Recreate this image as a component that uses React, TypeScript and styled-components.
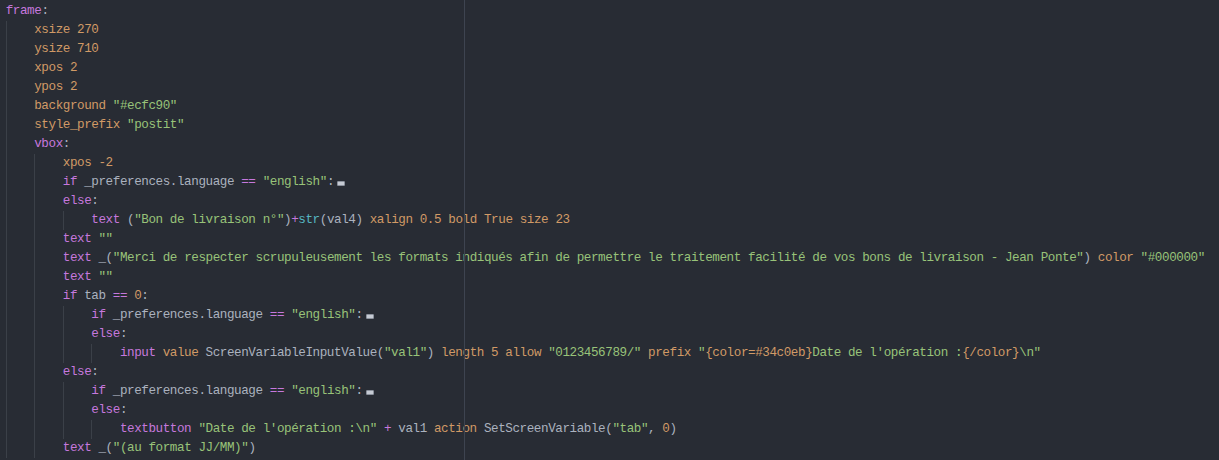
import React from "react";
import styled, { createGlobalStyle } from "styled-components";

const GlobalStyle = createGlobalStyle`
  html, body {
    margin: 0;
    padding: 0;
    background: #282c34;
    overflow: hidden;
  }
`;

type Kind = "kw" | "prop" | "num" | "str" | "fn" | "op" | "plain" | "tag" | "fold";
type Tok = [Kind, string];

const colors: Record<Kind, string> = {
  kw: "#c678dd",
  prop: "#d19a66",
  num: "#d19a66",
  str: "#98c379",
  fn: "#56b6c2",
  op: "#c678dd",
  plain: "#abb2bf",
  tag: "#d19a66",
  fold: "#abb2bf",
};

const Editor = styled.div`
  position: relative;
  width: 1219px;
  height: 460px;
  background: #282c34;
  padding: 2px 0 0 5.7px;
  box-sizing: border-box;
  font-family: "Liberation Mono", "DejaVu Sans Mono", monospace;
  font-size: 12.6px;
  letter-spacing: -0.42px;
  line-height: 19px;
  color: #abb2bf;
  display: flex;
  flex-direction: column;
  white-space: pre;
  overflow: hidden;
`;

const Ruler = styled.div`
  position: absolute;
  top: 0;
  bottom: 0;
  left: 464px;
  width: 1px;
  background: #3e4450;
`;

const Line = styled.div`
  display: flex;
  align-items: stretch;
  flex: none;
  height: 19px;
`;

const Indent = styled.span`
  display: inline-block;
  width: 28.56px;
  height: 19px;
  flex: none;
  background: linear-gradient(#3b4048, #3b4048) no-repeat left top / 1px 100%;
`;

const Token = styled.span<{ $kind: Kind }>`
  color: ${(p) => colors[p.$kind]};
`;

const Fold = styled.span`
  display: inline-block;
  align-self: center;
  width: 6px;
  height: 3px;
  margin-left: 3px;
  margin-top: 1px;
  border: 1px solid #8b919c;
  border-radius: 1px;
  background: #c5cad3;
`;

const fold: Tok = ["fold", ""];
const ifEnglish: Tok[] = [
  ["kw", "if"],
  ["plain", " _preferences.language "],
  ["op", "=="],
  ["plain", " "],
  ["str", '"english"'],
  ["plain", ":"],
  fold,
];

const lines: [number, Tok[]][] = [
  [0, [["kw", "frame"], ["plain", ":"]]],
  [1, [["prop", "xsize"], ["plain", " "], ["num", "270"]]],
  [1, [["prop", "ysize"], ["plain", " "], ["num", "710"]]],
  [1, [["prop", "xpos"], ["plain", " "], ["num", "2"]]],
  [1, [["prop", "ypos"], ["plain", " "], ["num", "2"]]],
  [1, [["prop", "background"], ["plain", " "], ["str", '"#ecfc90"']]],
  [1, [["prop", "style_prefix"], ["plain", " "], ["str", '"postit"']]],
  [1, [["kw", "vbox"], ["plain", ":"]]],
  [2, [["prop", "xpos"], ["plain", " "], ["num", "-2"]]],
  [2, ifEnglish],
  [2, [["kw", "else"], ["plain", ":"]]],
  [
    3,
    [
      ["kw", "text"],
      ["plain", " ("],
      ["str", '"Bon de livraison n°"'],
      ["plain", ")"],
      ["op", "+"],
      ["fn", "str"],
      ["plain", "(val4) "],
      ["prop", "xalign"],
      ["plain", " "],
      ["num", "0.5"],
      ["plain", " "],
      ["prop", "bold"],
      ["plain", " "],
      ["num", "True"],
      ["plain", " "],
      ["prop", "size"],
      ["plain", " "],
      ["num", "23"],
    ],
  ],
  [2, [["kw", "text"], ["plain", " "], ["str", '""']]],
  [
    2,
    [
      ["kw", "text"],
      ["plain", " _("],
      [
        "str",
        '"Merci de respecter scrupuleusement les formats indiqués afin de permettre le traitement facilité de vos bons de livraison - Jean Ponte"',
      ],
      ["plain", ") "],
      ["prop", "color"],
      ["plain", " "],
      ["str", '"#000000"'],
    ],
  ],
  [2, [["kw", "text"], ["plain", " "], ["str", '""']]],
  [2, [["kw", "if"], ["plain", " tab "], ["op", "=="], ["plain", " "], ["num", "0"], ["plain", ":"]]],
  [3, ifEnglish],
  [3, [["kw", "else"], ["plain", ":"]]],
  [
    4,
    [
      ["kw", "input"],
      ["plain", " "],
      ["prop", "value"],
      ["plain", " ScreenVariableInputValue("],
      ["str", '"val1"'],
      ["plain", ") "],
      ["prop", "length"],
      ["plain", " "],
      ["num", "5"],
      ["plain", " "],
      ["prop", "allow"],
      ["plain", " "],
      ["str", '"0123456789/"'],
      ["plain", " "],
      ["prop", "prefix"],
      ["plain", " "],
      ["str", '"'],
      ["tag", "{color=#34c0eb}"],
      ["str", "Date de l'opération :"],
      ["tag", "{/color}"],
      ["str", '\\n"'],
    ],
  ],
  [2, [["kw", "else"], ["plain", ":"]]],
  [3, ifEnglish],
  [3, [["kw", "else"], ["plain", ":"]]],
  [
    4,
    [
      ["kw", "textbutton"],
      ["plain", " "],
      ["str", "\"Date de l'opération :\\n\""],
      ["plain", " "],
      ["op", "+"],
      ["plain", " val1 "],
      ["prop", "action"],
      ["plain", " SetScreenVariable("],
      ["str", '"tab"'],
      ["plain", ", "],
      ["num", "0"],
      ["plain", ")"],
    ],
  ],
  [2, [["kw", "text"], ["plain", " _("], ["str", '"(au format JJ/MM)"'], ["plain", ")"]]],
];

export default function App() {
  return (
    <>
      <GlobalStyle />
      <Editor>
        {lines.map(([level, toks], i) => (
          <Line key={i}>
            {Array.from({ length: level }).map((_, j) => (
              <Indent key={j} />
            ))}
            {toks.map(([kind, text], k) =>
              kind === "fold" ? (
                <Fold key={k} />
              ) : (
                <Token key={k} $kind={kind}>
                  {text}
                </Token>
              )
            )}
          </Line>
        ))}
        <Ruler />
      </Editor>
    </>
  );
}
